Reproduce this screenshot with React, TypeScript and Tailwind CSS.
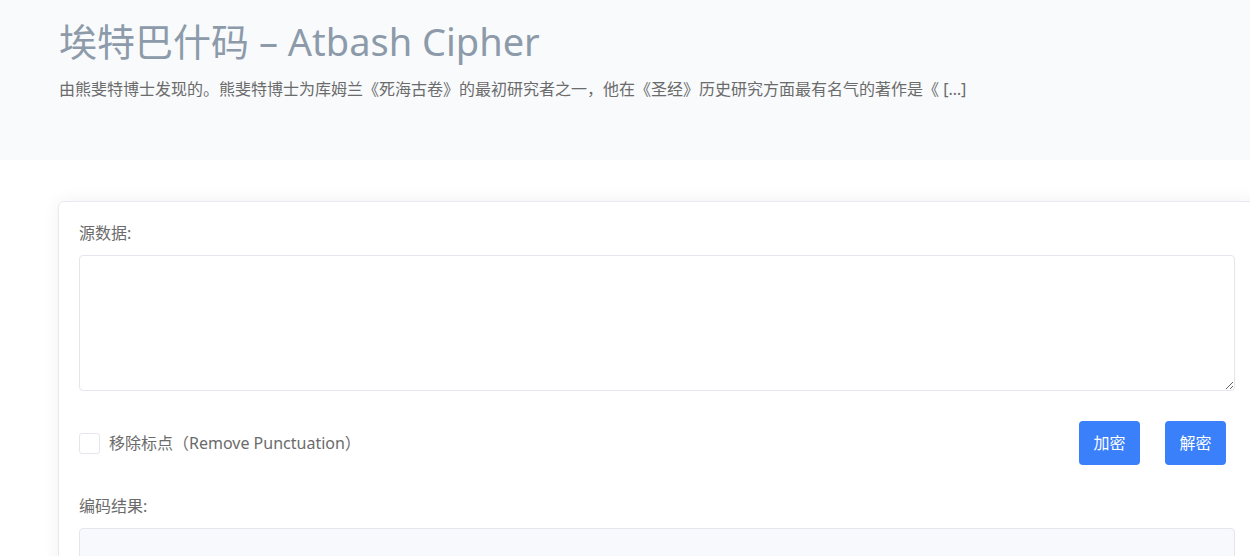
import { useState } from 'react'

export default function App() {
  const [input, setInput] = useState('')
  const [output, setOutput] = useState('')
  const [removePunct, setRemovePunct] = useState(false)

  const atbash = (s: string) => {
    let text = s
    if (removePunct) text = text.replace(/[^\w\s]/g, '')
    return text.replace(/[a-zA-Z]/g, (c) => {
      const base = c <= 'Z' ? 65 : 97
      return String.fromCharCode(base + 25 - (c.charCodeAt(0) - base))
    })
  }

  return (
    <div
      className="w-[1250px] h-[556px] overflow-hidden bg-white text-[#666]"
      style={{ fontFamily: '"Noto Sans", "Noto Sans CJK SC", sans-serif' }}
    >
      {/* Header */}
      <div className="bg-[#f8fafc] h-[160px] px-[59px] pt-[15px]">
        <h1 className="text-[38px] leading-[52px] font-normal text-[#8d9aaa]">
          埃特巴什码 – Atbash Cipher
        </h1>
        <p className="mt-[11px] text-[16px] leading-[22px] text-[#6b6b6b]">
          由熊斐特博士发现的。熊斐特博士为库姆兰《死海古卷》的最初研究者之一，他在《圣经》历史研究方面最有名气的著作是《 […]
        </p>
      </div>

      {/* Tool card */}
      <div className="pt-[41px] pl-[58px]">
        <div className="w-[1198px] bg-white border border-[#e8eaef] rounded-[6px] shadow-[0_0_18px_rgba(0,0,0,0.06)] px-[20px] pt-[19px] pb-[20px]">
          <label className="block text-[16px] leading-[24px] text-[#6b6b6b]">源数据:</label>
          <textarea
            value={input}
            onChange={(e) => setInput(e.target.value)}
            className="mt-[10px] block w-full h-[136px] border border-[#e4e6ee] rounded-[4px] p-[10px] text-[14px] outline-none"
          />

          <div className="mt-[30px] flex items-center justify-between">
            <label className="flex items-center gap-[9px] text-[16px] text-[#6b6b6b] cursor-pointer">
              <input
                type="checkbox"
                checked={removePunct}
                onChange={(e) => setRemovePunct(e.target.checked)}
                className="appearance-none w-[21px] h-[21px] border border-[#e4e6ee] rounded-[3px] bg-white checked:bg-[#3a80fb]"
              />
              移除标点（Remove Punctuation）
            </label>
            <div className="flex gap-[25px] mr-[9px]">
              <button
                onClick={() => setOutput(atbash(input))}
                className="w-[61px] h-[44px] rounded-[4px] bg-[#3a80fb] text-white text-[16px]"
              >
                加密
              </button>
              <button
                onClick={() => setOutput(atbash(input))}
                className="w-[61px] h-[44px] rounded-[4px] bg-[#3a80fb] text-white text-[16px]"
              >
                解密
              </button>
            </div>
          </div>

          <label className="mt-[29px] block text-[16px] leading-[24px] text-[#6b6b6b]">编码结果:</label>
          <div className="mt-[10px] w-full h-[136px] border border-[#e4e6ee] rounded-[4px] bg-[#f8f9fc] p-[10px] text-[14px]">
            {output}
          </div>
        </div>
      </div>
    </div>
  )
}
